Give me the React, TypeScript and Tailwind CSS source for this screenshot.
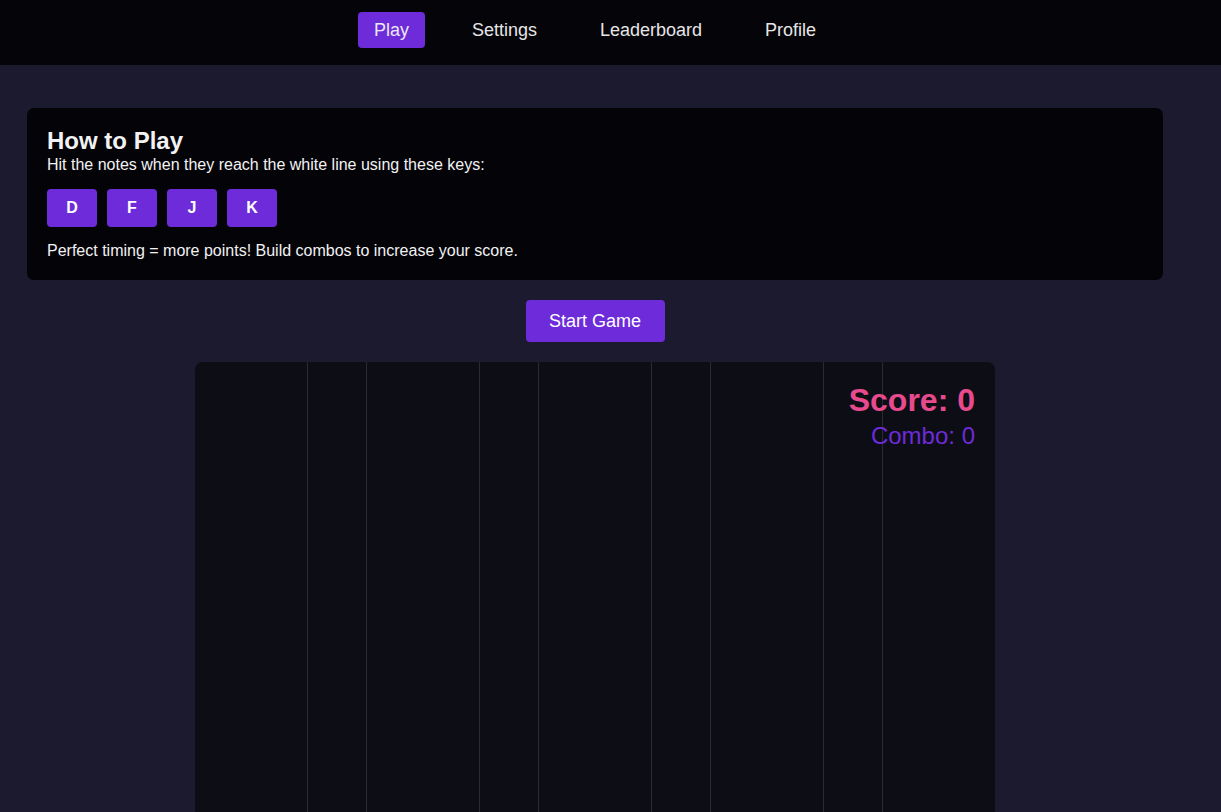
const navItems = ["Play", "Settings", "Leaderboard", "Profile"];
const keys = ["D", "F", "J", "K"];
const lanes = [0, 1, 2, 3];

const Header = function () {
  return (
    <header className="h-[65px] w-full bg-[#050409]">
      <nav className="flex w-[1190px] justify-center gap-[31px] pt-[12px]">
        {navItems.map((item) => (
          <button
            key={item}
            className={
              item === "Play"
                ? "h-[36px] rounded-[4px] bg-[#6d2bd9] px-4 text-[18px] text-[#ece8f7]"
                : "h-[36px] rounded-[4px] px-4 text-[18px] text-[#e6e6e6]"
            }
          >
            {item}
          </button>
        ))}
      </nav>
    </header>
  );
};

const HowToPlay = function () {
  return (
    <section className="rounded-[7px] bg-[#040308] px-5 pt-[19px] pb-[19px] text-[#f2f2f2]">
      <h2 className="text-[24px] leading-[28px] font-bold">How to Play</h2>
      <p className="text-[16px] leading-[20px]">
        Hit the notes when they reach the white line using these keys:
      </p>
      <div className="mt-[14px] flex gap-[10px]">
        {keys.map((k) => (
          <div
            key={k}
            className="flex h-[38px] w-[50px] items-center justify-center rounded-[4px] bg-[#6d2bd9] text-[16px] font-bold text-white"
          >
            {k}
          </div>
        ))}
      </div>
      <p className="mt-[14px] text-[16px] leading-[20px]">
        Perfect timing = more points! Build combos to increase your score.
      </p>
    </section>
  );
};

const GameArea = function () {
  return (
    <div className="relative mx-auto h-[600px] w-[800px] overflow-hidden rounded-[8px] bg-[#0d0d16]">
      <div className="flex h-full gap-[112px] pl-[112px]">
        {lanes.map((lane) => (
          <div
            key={lane}
            className="h-full w-[60px] border-x border-[#2a2a37]"
          />
        ))}
      </div>
      <div className="absolute top-[20px] right-[20px] text-right">
        <div className="text-[32px] leading-[37px] font-bold text-[#e84a8e]">
          Score: 0
        </div>
        <div className="mt-[3px] text-[24px] leading-[28px] text-[#6d2bd9]">
          Combo: 0
        </div>
      </div>
    </div>
  );
};

export default function App() {
  return (
    <div className="min-h-[812px] bg-[#1b1a2e] font-['Liberation_Sans',Arial,sans-serif]">
      <Header />
      <main className="w-[1190px] px-[27px] pt-[43px]">
        <HowToPlay />
        <div className="flex justify-center pt-[20px] pb-[20px]">
          <button className="h-[42px] w-[139px] rounded-[4px] bg-[#6d2bd9] text-[18px] text-white">
            Start Game
          </button>
        </div>
        <GameArea />
      </main>
    </div>
  );
}
